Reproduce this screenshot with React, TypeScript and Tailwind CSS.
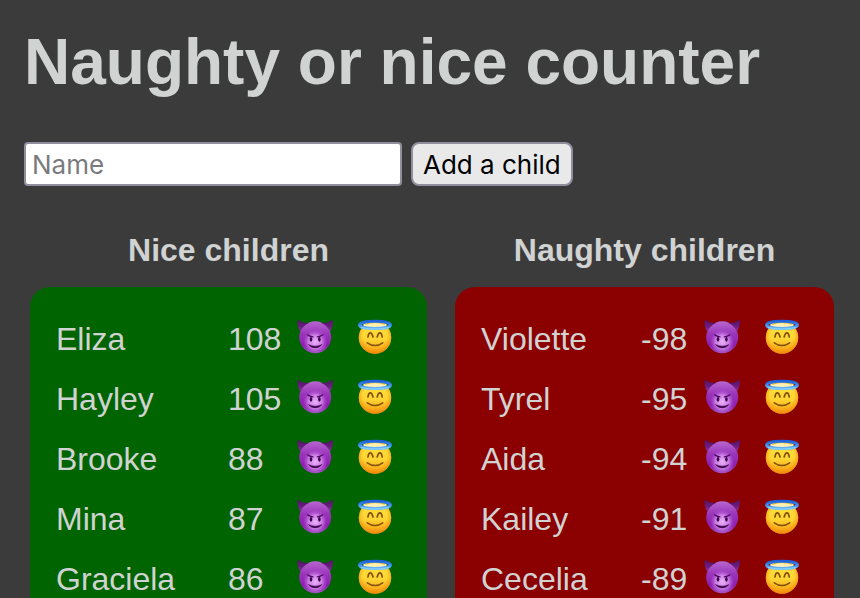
import { useState } from "react";

type Child = { name: string; score: number };

const niceChildren: Child[] = [
  { name: "Eliza", score: 108 },
  { name: "Hayley", score: 105 },
  { name: "Brooke", score: 88 },
  { name: "Mina", score: 87 },
  { name: "Graciela", score: 86 },
];

const naughtyChildren: Child[] = [
  { name: "Violette", score: -98 },
  { name: "Tyrel", score: -95 },
  { name: "Aida", score: -94 },
  { name: "Kailey", score: -91 },
  { name: "Cecelia", score: -89 },
];

/** Gradients shared by every face on the page. */
function FaceGradients() {
  return (
    <svg className="absolute size-0" aria-hidden="true">
      <defs>
        <linearGradient id="impSkin" x1="0" y1="0" x2="0" y2="1">
          <stop offset="0" stopColor="#b766cf" />
          <stop offset="0.4" stopColor="#9a35bb" />
          <stop offset="0.75" stopColor="#8d1fae" />
          <stop offset="1" stopColor="#9c4fc0" />
        </linearGradient>
        <radialGradient id="impGlow" cx="0.5" cy="0.64" r="0.38">
          <stop offset="0" stopColor="#eab2fa" />
          <stop offset="0.55" stopColor="#d68cec" stopOpacity="0.85" />
          <stop offset="1" stopColor="#b050d0" stopOpacity="0" />
        </radialGradient>
        <linearGradient id="impHorn" x1="0" y1="0" x2="0" y2="1">
          <stop offset="0" stopColor="#4f1263" />
          <stop offset="0.6" stopColor="#6a1c80" />
          <stop offset="1" stopColor="#8a35a4" />
        </linearGradient>
        <linearGradient id="angelSkin" x1="0" y1="0" x2="0" y2="1">
          <stop offset="0" stopColor="#ffe23c" />
          <stop offset="0.55" stopColor="#fed533" />
          <stop offset="0.85" stopColor="#fbae1b" />
          <stop offset="1" stopColor="#ee8d10" />
        </linearGradient>
        <radialGradient id="angelEdge" cx="0.5" cy="0.45" r="0.56">
          <stop offset="0.65" stopColor="#f59a10" stopOpacity="0" />
          <stop offset="1" stopColor="#ee8a0c" stopOpacity="0.85" />
        </radialGradient>
        <linearGradient id="halo" x1="0" y1="0" x2="0" y2="1">
          <stop offset="0" stopColor="#1f62d8" />
          <stop offset="0.5" stopColor="#3d8df0" />
          <stop offset="1" stopColor="#6fbcfb" />
        </linearGradient>
      </defs>
    </svg>
  );
}

function ImpFace() {
  return (
    <svg viewBox="0 0 36 36" className="block size-9" aria-hidden="true">
      <circle cx="18.2" cy="18.3" r="16" fill="url(#impSkin)" />
      <circle cx="18.2" cy="18.3" r="16" fill="url(#impGlow)" />
      <path d="M.8.2C.2 4.500.9 9 3.200 12.200C5 8.600 7.800 5.800 12 4C7.500 4.200 3.400 3 .8.2Z" fill="url(#impHorn)" />
      <path d="M35.600.2C36.200 4.500 35.500 9 33.200 12.200C31.400 8.600 28.600 5.800 24.400 4C28.900 4.200 33 3 35.600.2Z" fill="url(#impHorn)" />
      <path d="M10.500 15.800Q12.800 17.600 16 17.900M25.900 15.800Q23.600 17.600 20.400 17.900" fill="none" stroke="#4a0860" strokeWidth="1.200" strokeLinecap="round" />
      <ellipse cx="14" cy="20.300" rx="1.300" ry="2.400" fill="#3c064e" />
      <ellipse cx="22.400" cy="20.300" rx="1.300" ry="2.400" fill="#3c064e" />
      <path d="M11.500 25.500Q18.200 28.800 24.900 25.500Q22.800 28.900 18.200 28.900T11.500 25.500Z" fill="#3c064e" stroke="#3c064e" strokeWidth=".4" strokeLinejoin="round" />
    </svg>
  );
}

function AngelFace() {
  return (
    <svg viewBox="0 0 36 36" className="block size-9" aria-hidden="true">
      <circle cx="18" cy="18.500" r="16.200" fill="url(#angelSkin)" />
      <circle cx="18" cy="18.500" r="16.200" fill="url(#angelEdge)" />
      <ellipse cx="18" cy="5.900" rx="12" ry="2.800" fill="#fff0b4" />
      <path d="M8 5.200Q18 1.800 28 5.200" fill="none" stroke="#f0b020" strokeWidth="1.200" />
      <ellipse cx="18" cy="5.900" rx="15.400" ry="3.700" fill="none" stroke="url(#halo)" strokeWidth="3" />
      <path d="M4.500 8.500Q18 11.700 31.500 8.500" fill="none" stroke="#8ad3ff" strokeWidth="1" strokeLinecap="round" />
      <path d="M11 18C11.700 12.600 14.700 12.600 16 18M20.200 18C21.500 12.600 24.500 12.600 25.200 18" fill="none" stroke="#80500b" strokeWidth="1.700" strokeLinecap="round" />
      <path d="M10.300 23.800Q18 29.300 25.700 23.800" fill="none" stroke="#80500b" strokeWidth="1.500" strokeLinecap="round" />
    </svg>
  );
}

type ListProps = {
  title: string;
  rows: Child[];
  panelClass: string;
  scoreClass: string;
  onChange: (name: string, delta: number) => void;
};

function ChildList({ title, rows, panelClass, scoreClass, onChange }: ListProps) {
  return (
    <section>
      <h2 className="mb-[19px] text-center text-[32px] leading-9 font-bold">{title}</h2>
      <div className={`rounded-[20px] py-[22px] pr-[10px] pl-[26px] ${panelClass}`}>
        <table aria-label={title} className="w-full table-fixed text-left text-[32px] leading-9">
          <colgroup>
            <col />
            <col className={scoreClass} />
            <col className="w-[60px]" />
            <col className="w-[60px]" />
          </colgroup>
          <tbody>
            {rows.map((child) => (
              <tr key={child.name} className="h-[60px]">
                <th scope="row" className="p-0 font-normal">{child.name}</th>
                <td className="p-0">{child.score}</td>
                <td className="p-0 pb-1">
                  <button type="button" className="block" aria-label={`${child.name} was naughty`} onClick={() => onChange(child.name, -1)}>
                    <ImpFace />
                  </button>
                </td>
                <td className="p-0 pb-1">
                  <button type="button" className="block" aria-label={`${child.name} was nice`} onClick={() => onChange(child.name, 1)}>
                    <AngelFace />
                  </button>
                </td>
              </tr>
            ))}
          </tbody>
        </table>
      </div>
    </section>
  );
}

export default function App() {
  const [children, setChildren] = useState<Child[]>([...niceChildren, ...naughtyChildren]);
  const [name, setName] = useState("");

  const change = (who: string, delta: number) =>
    setChildren((list) => list.map((c) => (c.name === who ? { ...c, score: c.score + delta } : c)));

  const add = () => {
    const trimmed = name.trim();
    if (!trimmed || children.some((c) => c.name === trimmed)) return;
    setChildren((list) => [...list, { name: trimmed, score: 0 }]);
    setName("");
  };

  const nice = children.filter((c) => c.score >= 0).sort((a, b) => b.score - a.score);
  const naughty = children.filter((c) => c.score < 0).sort((a, b) => a.score - b.score);

  return (
    <main className="h-screen overflow-y-auto bg-[#3b3b3c] px-6 pt-[25px] font-['Liberation_Sans',Arial,sans-serif] text-[#d0d3d2] [scrollbar-width:none]">
      <FaceGradients />
      <h1 className="text-[64px] leading-[74px] font-bold">Naughty or nice counter</h1>
      <form
        className="mt-[43px] flex gap-[9px] font-[Inter,sans-serif] text-[26px] leading-8"
        onSubmit={(e) => {
          e.preventDefault();
          add();
        }}
      >
        <input
          type="text"
          aria-label="Name"
          placeholder="Name"
          value={name}
          onChange={(e) => setName(e.target.value)}
          className="h-11 w-[378px] rounded-[4px] border-2 border-[#8f8f9d] bg-white px-[6px] text-black placeholder:text-[#7a7b7e]"
        />
        <button type="submit" className="h-11 rounded-[8px] border-2 border-[#8f8f9d] bg-[#e9e9ea] px-[10px] pt-px text-black">
          Add a child
        </button>
      </form>
      <div className="mt-[46px] grid grid-cols-[397fr_379fr] gap-7 pr-[2px] pl-[6px]">
        <ChildList title="Nice children" rows={nice} panelClass="bg-[#006400]" scoreClass="w-[69px]" onChange={change} />
        <ChildList title="Naughty children" rows={naughty} panelClass="bg-[#8b0000]" scoreClass="w-[63px]" onChange={change} />
      </div>
    </main>
  );
}
